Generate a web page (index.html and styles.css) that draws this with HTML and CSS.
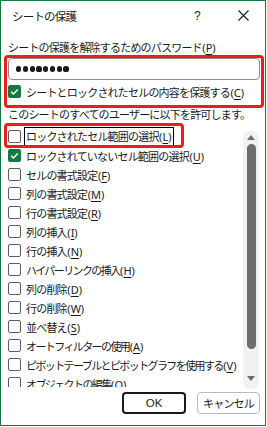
FILE: index.html
```html
<!DOCTYPE html>
<html lang="ja">
<head>
<meta charset="utf-8">
<link rel="stylesheet" href="styles.css">
</head>
<body>
<div class="dialog">
  <div class="titlebar">
    <span class="title">シートの保護</span>
    <span class="help">?</span>
    <span class="close"><svg width="11" height="11" viewBox="0 0 11 11"><path d="M0.5 0.5 L10.5 10.5 M10.5 0.5 L0.5 10.5" stroke="#1a1a1a" stroke-width="1.1" fill="none"/></svg></span>
  </div>
  <div class="content">
    <div class="label">シートの保護を解除するためのパスワード<span class="key">(<u>P</u>)</span></div>
    <div class="pw"><span class="dot"></span><span class="dot"></span><span class="dot"></span><span class="dot"></span><span class="dot"></span><span class="dot"></span><span class="dot"></span><span class="dot"></span></div>
    <div class="row main-check"><span class="cb checked"><svg width="13" height="13" viewBox="0 0 13 13"><path d="M3.2 6.8 L5.4 9 L9.8 4.4" stroke="#fff" stroke-width="1.4" fill="none"/></svg></span><span>シートとロックされたセルの内容を保護する<span class="key">(<u>C</u>)</span></span></div>
    <div class="label sentence">このシートのすべてのユーザーに以下を許可します。</div>
    <div class="listbox">
      <div class="list">
        <div class="row item"><span class="cb"></span><span class="focus">ロックされたセル範囲の選択<span class="key">(<u>L</u>)</span></span></div>
        <div class="row item"><span class="cb checked"><svg width="13" height="13" viewBox="0 0 13 13"><path d="M3.2 6.8 L5.4 9 L9.8 4.4" stroke="#fff" stroke-width="1.4" fill="none"/></svg></span><span>ロックされていないセル範囲の選択<span class="key">(<u>U</u>)</span></span></div>
        <div class="row item"><span class="cb"></span><span>セルの書式設定<span class="key">(<u>F</u>)</span></span></div>
        <div class="row item"><span class="cb"></span><span>列の書式設定<span class="key">(<u>M</u>)</span></span></div>
        <div class="row item"><span class="cb"></span><span>行の書式設定<span class="key">(<u>R</u>)</span></span></div>
        <div class="row item"><span class="cb"></span><span>列の挿入<span class="key">(<u>I</u>)</span></span></div>
        <div class="row item"><span class="cb"></span><span>行の挿入<span class="key">(<u>N</u>)</span></span></div>
        <div class="row item"><span class="cb"></span><span class="kana">ハイパーリンクの挿入<span class="key">(<u>H</u>)</span></span></div>
        <div class="row item"><span class="cb"></span><span>列の削除<span class="key">(<u>D</u>)</span></span></div>
        <div class="row item"><span class="cb"></span><span>行の削除<span class="key">(<u>W</u>)</span></span></div>
        <div class="row item"><span class="cb"></span><span>並べ替え<span class="key">(<u>S</u>)</span></span></div>
        <div class="row item"><span class="cb"></span><span class="kana">オートフィルターの使用<span class="key">(<u>A</u>)</span></span></div>
        <div class="row item"><span class="cb"></span><span class="kana">ピボットテーブルとピボットグラフを使用する<span class="key">(<u>V</u>)</span></span></div>
        <div class="row item"><span class="cb"></span><span class="kana">オブジェクトの編集<span class="key">(<u>O</u>)</span></span></div>
      </div>
      <div class="scrollbar">
        <span class="arrow up"></span>
        <span class="thumb"></span>
        <span class="arrow down"></span>
      </div>
    </div>
    <div class="buttons">
      <span class="btn ok">OK</span>
      <span class="btn">キャンセル</span>
    </div>
  </div>
  <div class="mark mark1"></div>
  <div class="mark mark2"></div>
</div>
</body>
</html>
```
FILE: styles.css
```css
html, body {
  margin: 0;
  padding: 0;
  background: #fff;
}
body {
  font-family: "Noto Sans CJK JP", "Noto Sans", sans-serif;
  font-size: 11px;
  letter-spacing: -0.8px;
  color: #1a1a1a;
}
.dialog {
  position: relative;
  width: 266px;
  height: 426px;
  box-sizing: border-box;
  border: 1px solid #157a3e;
  background: #fff;
  overflow: hidden;
}
.titlebar {
  height: 29px;
  display: flex;
  align-items: center;
}
.title {
  margin-left: 11px;
  flex: 1;
  font-size: 11.5px;
}
.help {
  font-family: "Liberation Sans", sans-serif;
  font-size: 12px;
  width: 44px;
  letter-spacing: 0;
}
.close {
  width: 27px;
  display: flex;
  align-items: center;
}
.content {
  padding: 0 5px 9px 7px;
}
.label {
  margin-top: 9px;
  height: 16px;
  line-height: 16px;
  white-space: nowrap;
}
.key {
  font-family: "Noto Sans", "Liberation Sans", sans-serif;
  letter-spacing: 0;
  font-size: 11px;
  margin-left: 0.5px;
}
.kana {
  letter-spacing: -1.6px;
}
.kana .key {
  letter-spacing: 0;
}
u {
  text-decoration-thickness: 1px;
  text-underline-offset: 2px;
}
.pw {
  margin-top: 3px;
  height: 22px;
  box-sizing: border-box;
  border: 1px solid #8c8c8c;
  border-radius: 4px;
  display: flex;
  align-items: center;
  gap: 1.6px;
  padding-left: 7px;
}
.dot {
  width: 5.2px;
  height: 5.2px;
  border-radius: 50%;
  background: #1a1a1a;
}
.row {
  display: flex;
  align-items: center;
  white-space: nowrap;
}
.main-check {
  height: 23px;
}
.cb {
  width: 13px;
  height: 13px;
  box-sizing: border-box;
  border: 1px solid #5d5d5d;
  border-radius: 2px;
  margin-right: 5px;
  flex: none;
  display: block;
  position: relative;
}
.cb.checked {
  background: #147a42;
  border-color: #147a42;
}
.cb svg {
  position: absolute;
  left: -1px;
  top: -1px;
}
.sentence {
  margin-top: 3px;
}
.listbox {
  margin-top: 5px;
  display: flex;
  height: 260px;
}
.list {
  flex: 1;
  overflow: hidden;
  min-width: 0;
}
.item {
  height: 19px;
}
.focus {
  outline: 1px solid #000;
  outline-offset: 1px;
  line-height: 14px;
}
.scrollbar {
  width: 16px;
  margin: 4px 1px 0 0;
  background: #f1f1f1;
  border-radius: 8px;
  display: flex;
  flex-direction: column;
  align-items: center;
  height: 258px;
  flex: none;
}
.arrow {
  width: 0;
  height: 0;
  border-left: 4px solid transparent;
  border-right: 4px solid transparent;
}
.arrow.up {
  margin-top: 4px;
  border-bottom: 5px solid #6d6d6d;
}
.arrow.down {
  margin-top: 27px;
  border-top: 5px solid #6d6d6d;
}
.thumb {
  margin-top: 4px;
  width: 9px;
  height: 205px;
  border-radius: 4.5px;
  background: #6d6d6d;
}
.buttons {
  margin-top: 5px;
  display: flex;
  justify-content: flex-end;
  gap: 11px;
}
.btn {
  width: 63px;
  height: 22px;
  box-sizing: border-box;
  border: 1px solid #bababa;
  border-radius: 4px;
  display: flex;
  align-items: center;
  justify-content: center;
  font-size: 11px;
}
.btn.ok {
  width: 64px;
  border: 2px solid #1a1a1a;
  font-family: "Liberation Sans", sans-serif;
  letter-spacing: 0;
  font-size: 11.5px;
}
.mark {
  position: absolute;
  border: 3px solid #ee1c1c;
  border-radius: 4px;
  box-sizing: border-box;
  pointer-events: none;
}
.mark1 {
  left: 3px;
  top: 54px;
  width: 260px;
  height: 53px;
}
.mark2 {
  left: 3px;
  top: 122px;
  width: 180px;
  height: 25px;
}
```
